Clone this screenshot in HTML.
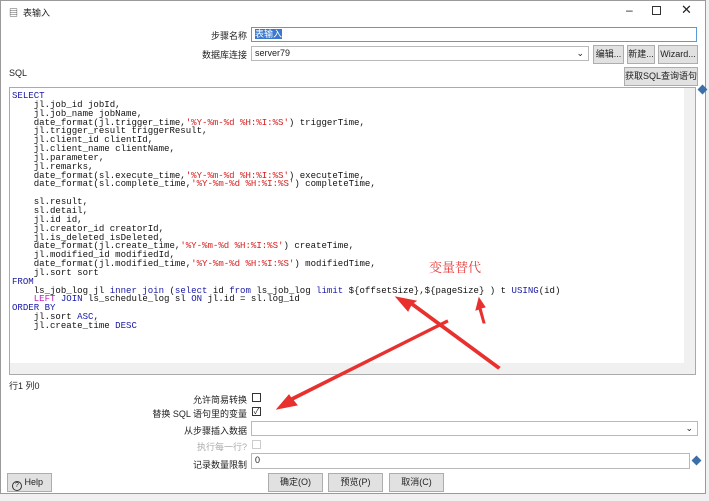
<!DOCTYPE html>
<html><head><meta charset="utf-8"><style>
*{margin:0;padding:0;box-sizing:border-box}
body{width:709px;height:500px;background:#f0f0f0;position:relative;overflow:hidden;font-family:"Liberation Sans","Noto Sans CJK SC",sans-serif;font-size:9px;color:#222}
.win{position:absolute;left:0;top:0;width:706px;height:494px;background:#fff;border:1px solid #9a9a9a}
.a{position:absolute}
.lbl{position:absolute;text-align:right;font-size:9px}
.inp{position:absolute;background:#fff;border:1px solid #b9b9b9;height:15px;font-size:9px;line-height:13px;padding-left:3px}
.btn{position:absolute;background:#e1e1e1;border:1px solid #adadad;font-size:9px;text-align:center;line-height:17px;height:19px}
pre{position:absolute;left:11px;top:91px;font-family:"Liberation Mono",monospace;font-size:9.05px;line-height:8.85px;color:#111}
.k{color:#1a1aa6}.s{color:#d62020}.p{color:#c020c0}
.cb{position:absolute;width:9px;height:9px;border:1px solid #333;background:#fff}
</style></head><body>
<div class="win">
<div class="a" style="left:8px;top:5px;font-size:9px">&#9636;&nbsp; 表输入</div>
<div class="a" style="left:625px;top:2px;font-size:12px">&#8211;</div>
<div class="a" style="left:651px;top:5px;width:9px;height:9px;border:1px solid #333"></div>
<div class="a" style="left:680px;top:1px;font-size:13px">&#10005;</div>

<div class="lbl" style="left:180px;width:66px;top:28px">步骤名称</div>
<div class="inp" style="left:250px;top:26px;width:446px;border-color:#5a9ad6"><span style="background:#3a78d0;color:#fff">表输入</span></div>
<div class="lbl" style="left:180px;width:66px;top:47px">数据库连接</div>
<div class="inp" style="left:250px;top:45px;width:338px">server79<span style="position:absolute;right:4px;top:0">&#8964;</span></div>
<div class="btn" style="left:592px;top:44px;width:31px">编辑...</div>
<div class="btn" style="left:626px;top:44px;width:28px">新建...</div>
<div class="btn" style="left:657px;top:44px;width:40px">Wizard...</div>
<div class="a" style="left:8px;top:67px">SQL</div>
<div class="btn" style="left:623px;top:66px;width:74px;white-space:nowrap;overflow:hidden">获取SQL查询语句...</div>

<div class="a" style="left:8px;top:86px;width:687px;height:288px;border:1px solid #aaa;background:#fff"></div>
<div class="a" style="left:683px;top:87px;width:11px;height:286px;background:#f0f0f0"></div>
<div class="a" style="left:9px;top:362px;width:674px;height:11px;background:#f0f0f0"></div>
<div class="a" style="left:698px;top:85px;width:7px;height:7px;background:#3a6fa8;transform:rotate(45deg)"></div>
<pre><span class="k">SELECT</span>
    jl.job_id jobId,
    jl.job_name jobName,
    date_format(jl.trigger_time,<span class="s">'%Y-%m-%d %H:%I:%S'</span>) triggerTime,
    jl.trigger_result triggerResult,
    jl.client_id clientId,
    jl.client_name clientName,
    jl.parameter,
    jl.remarks,
    date_format(sl.execute_time,<span class="s">'%Y-%m-%d %H:%I:%S'</span>) executeTime,
    date_format(sl.complete_time,<span class="s">'%Y-%m-%d %H:%I:%S'</span>) completeTime,

    sl.result,
    sl.detail,
    jl.id id,
    jl.creator_id creatorId,
    jl.is_deleted isDeleted,
    date_format(jl.create_time,<span class="s">'%Y-%m-%d %H:%I:%S'</span>) createTime,
    jl.modified_id modifiedId,
    date_format(jl.modified_time,<span class="s">'%Y-%m-%d %H:%I:%S'</span>) modifiedTime,
    jl.sort sort
<span class="k">FROM</span>
    ls_job_log jl <span class="k">inner join</span> (<span class="k">select</span> id <span class="k">from</span> ls_job_log <span class="k">limit</span> ${offsetSize},${pageSize} ) t <span class="k">USING</span>(id)
    <span class="p">LEFT</span> <span class="k">JOIN</span> ls_schedule_log sl <span class="k">ON</span> jl.id = sl.log_id
<span class="k">ORDER BY</span>
    jl.sort <span class="k">ASC</span>,
    jl.create_time <span class="k">DESC</span></pre>

<div class="a" style="left:428px;top:256px;color:#e83a3a;font-size:13px;font-family:'Noto Serif CJK SC',serif">变量替代</div>
<svg class="a" style="left:0;top:0" width="709" height="500">
<g fill="#e8302e" stroke="#e8302e">
<path d="M497 368 L410 304 L407 310 L395 296 L415 300 L412 302 L499 366 Z"/>
<path d="M447 321 L292 399 L296 404 L276 408 L288 394 L290 397 L446 319 Z"/>
<path d="M484 322 L480 307 L484 306 L478 297 L475 309 L478 308 L482 322 Z"/>
</g></svg>

<div class="a" style="left:8px;top:378px">行1 列0</div>
<div class="lbl" style="left:150px;width:96px;top:392px">允许简易转换</div>
<div class="cb" style="left:251px;top:392px"></div>
<div class="lbl" style="left:120px;width:126px;top:406px">替换 SQL 语句里的变量</div>
<div class="cb" style="left:251px;top:406px;font-size:8px;line-height:7px;text-align:center">&#10003;</div>
<div class="lbl" style="left:150px;width:96px;top:423px">从步骤插入数据</div>
<div class="inp" style="left:250px;top:420px;width:447px"><span style="position:absolute;right:4px;top:0">&#8964;</span></div>
<div class="lbl" style="left:150px;width:96px;top:439px;color:#aaa">执行每一行?</div>
<div class="cb" style="left:251px;top:439px;border-color:#ccc"></div>
<div class="lbl" style="left:150px;width:96px;top:457px">记录数量限制</div>
<div class="inp" style="left:250px;top:452px;width:439px;height:16px">0</div>
<div class="a" style="left:692px;top:456px;width:7px;height:7px;background:#3a6fa8;transform:rotate(45deg)"></div>

<div class="btn" style="left:6px;top:472px;width:45px;height:19px;text-align:left;padding-left:4px;white-space:nowrap"><span style="display:inline-block;width:10px;height:10px;border:1px solid #333;border-radius:50%;font-size:7px;line-height:8px;text-align:center;vertical-align:-2px">?</span> Help</div>
<div class="btn" style="left:267px;top:472px;width:55px">确定(O)</div>
<div class="btn" style="left:327px;top:472px;width:55px">预览(P)</div>
<div class="btn" style="left:388px;top:472px;width:55px">取消(C)</div>
</div>
</body></html>
